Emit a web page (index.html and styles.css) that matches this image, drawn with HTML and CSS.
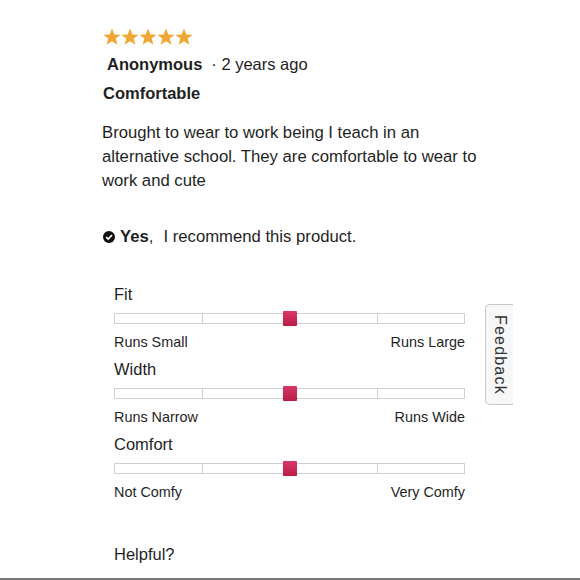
FILE: index.html
```html
<!DOCTYPE html>
<html>
<head>
<meta charset="utf-8">
<link rel="stylesheet" href="styles.css">
</head>
<body>
<div class="page">
  <div class="review">
    <div class="stars">
      <svg viewBox="0 0 20 19" class="star"><polygon points="10,0 12.6,6.6 19.6,6.9 14.1,11.3 16,18.2 10,14.3 4,18.2 5.9,11.3 0.4,6.9 7.4,6.6"/></svg>
      <svg viewBox="0 0 20 19" class="star"><polygon points="10,0 12.6,6.6 19.6,6.9 14.1,11.3 16,18.2 10,14.3 4,18.2 5.9,11.3 0.4,6.9 7.4,6.6"/></svg>
      <svg viewBox="0 0 20 19" class="star"><polygon points="10,0 12.6,6.6 19.6,6.9 14.1,11.3 16,18.2 10,14.3 4,18.2 5.9,11.3 0.4,6.9 7.4,6.6"/></svg>
      <svg viewBox="0 0 20 19" class="star"><polygon points="10,0 12.6,6.6 19.6,6.9 14.1,11.3 16,18.2 10,14.3 4,18.2 5.9,11.3 0.4,6.9 7.4,6.6"/></svg>
      <svg viewBox="0 0 20 19" class="star"><polygon points="10,0 12.6,6.6 19.6,6.9 14.1,11.3 16,18.2 10,14.3 4,18.2 5.9,11.3 0.4,6.9 7.4,6.6"/></svg>
    </div>
    <div class="meta"><span class="author">Anonymous</span><span class="date">· 2 years ago</span></div>
    <div class="title">Comfortable</div>
    <p class="body">Brought to wear to work being I teach in an alternative school. They are comfortable to wear to work and cute</p>
    <div class="recommend">
      <svg class="check" viewBox="0 0 12 12"><circle cx="6" cy="6" r="6" fill="#111"/><path d="M3.2 6.2 L5.2 8.1 L8.9 4.2" stroke="#fff" stroke-width="1.8" fill="none"/></svg>
      <span class="yes">Yes</span><span class="comma">,</span><span class="rtext">I recommend this product.</span>
    </div>
  </div>

  <div class="ratings">
    <div class="rating">
      <div class="rlabel">Fit</div>
      <div class="track"><span class="seg"></span><span class="seg"></span><span class="seg"></span><span class="seg"></span><span class="handle"></span></div>
      <div class="ends"><span>Runs Small</span><span>Runs Large</span></div>
    </div>
    <div class="rating">
      <div class="rlabel">Width</div>
      <div class="track"><span class="seg"></span><span class="seg"></span><span class="seg"></span><span class="seg"></span><span class="handle"></span></div>
      <div class="ends"><span>Runs Narrow</span><span>Runs Wide</span></div>
    </div>
    <div class="rating">
      <div class="rlabel">Comfort</div>
      <div class="track"><span class="seg"></span><span class="seg"></span><span class="seg"></span><span class="seg"></span><span class="handle"></span></div>
      <div class="ends"><span>Not Comfy</span><span>Very Comfy</span></div>
    </div>
    <div class="helpful">Helpful?</div>
  </div>
</div>
<div class="feedback">Feedback</div>
<div class="bottom-bar"></div>
</body>
</html>
```

FILE: styles.css
```css
html, body {
  margin: 0;
  padding: 0;
  background: #fff;
}
body {
  font-family: "Liberation Sans", Arial, sans-serif;
  color: #1f1f1f;
  width: 580px;
  height: 580px;
  overflow: hidden;
  position: relative;
}
.page {
  padding: 28px 0 0 103px;
}
.stars {
  display: flex;
  height: 18px;
}
.star {
  width: 18px;
  height: 18px;
  fill: #f1a735;
}
.meta {
  margin-top: 8px;
  font-size: 16.5px;
  line-height: 20px;
  padding-left: 4px;
}
.author {
  font-weight: bold;
}
.date {
  margin-left: 9px;
  color: #222;
}
.title {
  margin-top: 9px;
  font-size: 16.5px;
  font-weight: bold;
  line-height: 20px;
}
.body {
  margin: 18px 0 0 -1px;
  width: 390px;
  font-size: 16.7px;
  line-height: 24px;
}
.recommend {
  margin-top: 34px;
  display: flex;
  align-items: center;
  font-size: 16.7px;
  line-height: 20px;
}
.check {
  width: 12px;
  height: 12px;
  margin-right: 5px;
}
.yes {
  font-weight: bold;
}
.rtext {
  margin-left: 10px;
}
.ratings {
  margin: 37px 0 0 11px;
  width: 351px;
}
.rating {
  height: 75px;
}
.rlabel {
  font-size: 16.5px;
  line-height: 20px;
}
.track {
  position: relative;
  margin-top: 9px;
  height: 11px;
  display: flex;
}
.seg {
  flex: 1;
  border: 1px solid #d0d0d0;
  border-left-width: 0;
  background: #fff;
}
.seg:first-child {
  border-left-width: 1px;
}
.handle {
  position: absolute;
  left: 169px;
  top: -2px;
  width: 14px;
  height: 15px;
  background: linear-gradient(#d8386a, #b81e45);
  border-radius: 1px;
  box-shadow: 0 0 1px rgba(0,0,0,0.3);
}
.ends {
  display: flex;
  justify-content: space-between;
  margin-top: 9px;
  font-size: 14.4px;
  line-height: 18px;
}
.helpful {
  margin-top: 35px;
  font-size: 16.5px;
  line-height: 20px;
}
.feedback {
  position: absolute;
  left: 485px;
  top: 304px;
  width: 28px;
  height: 101px;
  box-sizing: border-box;
  border: 1px solid #c8c8c8;
  border-right: none;
  border-radius: 5px 0 0 5px;
  background: #f7f7f7;
  writing-mode: vertical-rl;
  font-size: 16px;
  color: #333;
  display: flex;
  align-items: center;
  justify-content: center;
  letter-spacing: 1.2px;
}
.bottom-bar {
  position: absolute;
  left: 0;
  bottom: 0;
  width: 580px;
  height: 2px;
  background: #777;
}
```
